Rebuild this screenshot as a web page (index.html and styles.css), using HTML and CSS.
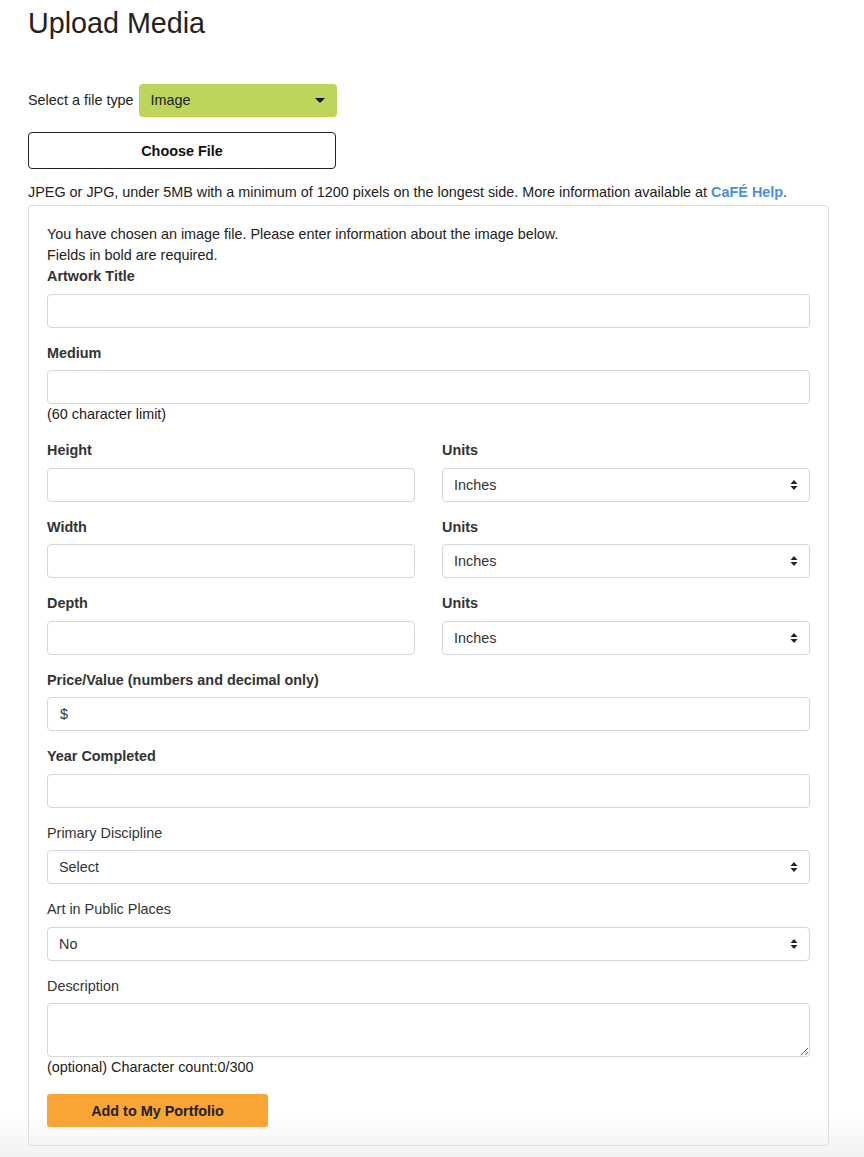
FILE: index.html
```html
<!DOCTYPE html>
<html lang="en">
<head>
<meta charset="utf-8">
<title>Upload Media</title>
<link rel="stylesheet" href="styles.css">
</head>
<body>
<div class="page">
  <h1 class="title">Upload Media</h1>

  <div class="type-row">
    <span class="type-label">Select a file type</span>
    <div class="type-select">
      <span>Image</span>
      <svg class="type-caret" width="10" height="5" viewBox="0 0 10 5"><path d="M0 0h10L5 5z" fill="#111"/></svg>
    </div>
  </div>

  <button class="choose-btn" type="button">Choose File</button>

  <p class="file-info">JPEG or JPG, under 5MB with a minimum of 1200 pixels on the longest side. More information available at <a class="help-link" href="#">CaFÉ Help</a>.</p>

  <div class="card">
    <p class="intro">You have chosen an image file. Please enter information about the image below.<br>Fields in bold are required.</p>

    <div class="group">
      <label class="lbl req">Artwork Title</label>
      <input class="field" type="text">
    </div>

    <div class="group">
      <label class="lbl req">Medium</label>
      <input class="field" type="text">
      <div class="help">(60 character limit)</div>
    </div>

    <div class="pair">
      <div class="group">
        <label class="lbl req">Height</label>
        <input class="field" type="text">
      </div>
      <div class="group">
        <label class="lbl req">Units</label>
        <div class="sel-wrap">
          <select class="field sel"><option>Inches</option></select>
          <svg class="arrows" width="8" height="10" viewBox="0 0 8 10"><path d="M4 0L7.5 4H0.5z M4 10L7.5 6H0.5z" fill="#222"/></svg>
        </div>
      </div>
    </div>

    <div class="pair">
      <div class="group">
        <label class="lbl req">Width</label>
        <input class="field" type="text">
      </div>
      <div class="group">
        <label class="lbl req">Units</label>
        <div class="sel-wrap">
          <select class="field sel"><option>Inches</option></select>
          <svg class="arrows" width="8" height="10" viewBox="0 0 8 10"><path d="M4 0L7.5 4H0.5z M4 10L7.5 6H0.5z" fill="#222"/></svg>
        </div>
      </div>
    </div>

    <div class="pair">
      <div class="group">
        <label class="lbl req">Depth</label>
        <input class="field" type="text">
      </div>
      <div class="group">
        <label class="lbl req">Units</label>
        <div class="sel-wrap">
          <select class="field sel"><option>Inches</option></select>
          <svg class="arrows" width="8" height="10" viewBox="0 0 8 10"><path d="M4 0L7.5 4H0.5z M4 10L7.5 6H0.5z" fill="#222"/></svg>
        </div>
      </div>
    </div>

    <div class="group">
      <label class="lbl req">Price/Value (numbers and decimal only)</label>
      <input class="field" type="text" value="$">
    </div>

    <div class="group">
      <label class="lbl req">Year Completed</label>
      <input class="field" type="text">
    </div>

    <div class="group">
      <label class="lbl">Primary Discipline</label>
      <div class="sel-wrap">
        <select class="field sel"><option>Select</option></select>
        <svg class="arrows" width="8" height="10" viewBox="0 0 8 10"><path d="M4 0L7.5 4H0.5z M4 10L7.5 6H0.5z" fill="#222"/></svg>
      </div>
    </div>

    <div class="group">
      <label class="lbl">Art in Public Places</label>
      <div class="sel-wrap">
        <select class="field sel"><option>No</option></select>
        <svg class="arrows" width="8" height="10" viewBox="0 0 8 10"><path d="M4 0L7.5 4H0.5z M4 10L7.5 6H0.5z" fill="#222"/></svg>
      </div>
    </div>

    <div class="group last">
      <label class="lbl">Description</label>
      <textarea class="field area"></textarea>
      <div class="help">(optional) Character count:0/300</div>
    </div>

    <button class="add-btn" type="button">Add to My Portfolio</button>
  </div>
</div>
</body>
</html>
```

FILE: styles.css
```css
html {
  margin: 0;
  min-height: 100%;
  background: linear-gradient(to bottom, #ffffff 1112px, #f2f2f2 1157px);
}

body {
  margin: 0;
  font-family: "Liberation Sans", Arial, Helvetica, sans-serif;
  font-size: 14.4px;
  line-height: 21px;
  color: #333333;
}

.page {
  width: 801px;
  padding: 0 0 0 28px;
}

.title {
  margin: 7px 0 0;
  font-size: 28.7px;
  line-height: 33px;
  font-weight: 400;
  color: #222222;
}

.type-row {
  margin-top: 44px;
  display: flex;
  align-items: center;
  gap: 5px;
}

.type-label {
  color: #222;
}

.type-select {
  position: relative;
  width: 198px;
  height: 33px;
  box-sizing: border-box;
  padding: 0 12px;
  background: #bdd55b;
  border-radius: 4px;
  display: flex;
  align-items: center;
  justify-content: space-between;
  color: #222;
}

.choose-btn {
  display: block;
  margin-top: 15px;
  width: 308px;
  height: 37px;
  background: #fff;
  border: 1px solid #222;
  border-radius: 4px;
  font-family: inherit;
  font-size: 14.4px;
  font-weight: 700;
  color: #111;
  padding: 0;
}

.file-info {
  margin: 13px 0 0;
  color: #222;
}

.help-link {
  color: #4a90e2;
  font-weight: 700;
  text-decoration: none;
}

.card {
  margin-top: 2px;
  border: 1px solid #dddddd;
  border-radius: 4px;
  padding: 18px 18px 18px;
}

.intro {
  margin: 0;
  color: #222;
}

.group {
  margin-bottom: 15px;
}

.group.last {
  margin-bottom: 16px;
}

.lbl {
  display: block;
  margin-bottom: 6.5px;
  color: #333;
}

.lbl.req {
  font-weight: 700;
}

.field {
  display: block;
  width: 100%;
  height: 34px;
  box-sizing: border-box;
  margin: 0;
  padding: 0 12px;
  border: 1px solid #d3d6da;
  border-radius: 4px;
  background: #fff;
  font-family: inherit;
  font-size: 14.4px;
  color: #333;
  outline: none;
}

.sel {
  appearance: none;
  -webkit-appearance: none;
  padding-left: 11px;
}

.sel-wrap {
  position: relative;
}

.arrows {
  position: absolute;
  right: 12px;
  top: 12px;
  pointer-events: none;
}

.area {
  height: 54px;
  margin-top: 1px;
  padding: 6px 12px;
  resize: vertical;
}

.help {
  color: #222;
}

.pair {
  display: grid;
  grid-template-columns: 368px 368px;
  column-gap: 27px;
}

.add-btn {
  display: block;
  width: 221px;
  height: 33px;
  padding: 0;
  border: none;
  border-radius: 3px;
  background: #f8a535;
  font-family: inherit;
  font-size: 14.4px;
  font-weight: 700;
  color: #222;
}
```
